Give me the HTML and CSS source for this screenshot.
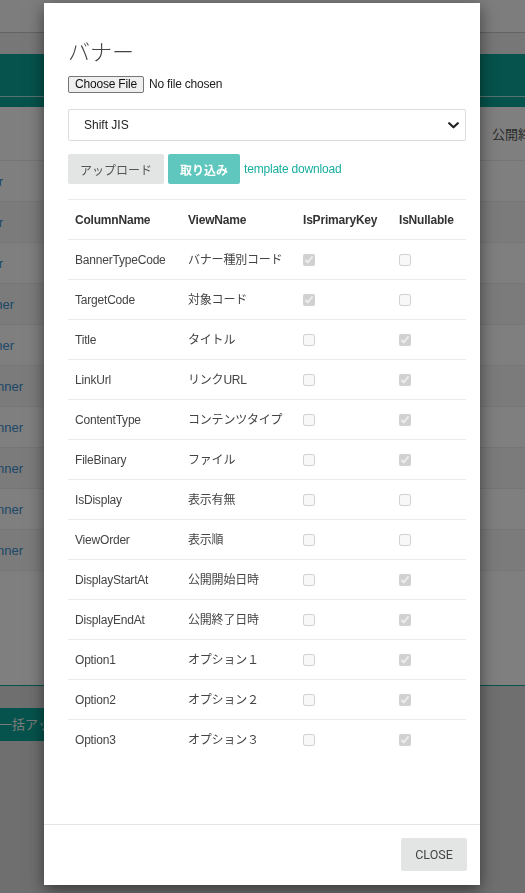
FILE: index.html
```html
<!DOCTYPE html>
<html lang="ja">
<head>
<meta charset="utf-8">
<title>バナー</title>
<link rel="stylesheet" href="styles.css">
</head>
<body>
<div class="page">
  <div class="topbar"></div>
  <div class="subbar"></div>
  <div class="hero"><div class="hero-main"></div><div class="hero-foot"></div></div>
  <div class="list">
    <div class="list-head"><span class="list-head-text">公開終了日時</span></div>
    <div class="list-row"><span class="cut cut-1">TopBanner</span></div>
    <div class="list-row stripe"><span class="cut cut-1">SubBanner</span></div>
    <div class="list-row"><span class="cut cut-1">MainBanner</span></div>
    <div class="list-row stripe"><span class="cut cut-3">SideBanner</span></div>
    <div class="list-row"><span class="cut cut-3">FootBanner</span></div>
    <div class="list-row stripe"><span class="cut cut-4">TopBanner</span></div>
    <div class="list-row"><span class="cut cut-4">SubBanner</span></div>
    <div class="list-row stripe"><span class="cut cut-4">MainBanner</span></div>
    <div class="list-row"><span class="cut cut-4">SideBanner</span></div>
    <div class="list-row stripe"><span class="cut cut-4">FootBanner</span></div>
    <div class="list-end"></div>
  </div>
  <div class="page-bottom">
    <span class="bulk">一括アップロード</span>
  </div>
</div>

<div class="backdrop"></div>

<div class="modal">
  <div class="modal-body">
    <h2 class="modal-title">バナー</h2>
    <div class="file-row">
      <span class="file-btn">Choose File</span>
      <span class="file-name">No file chosen</span>
    </div>
    <div class="select">
      <span>Shift JIS</span>
      <svg class="chev" width="11" height="7" viewBox="0 0 11 7"><path d="M1.2 1.2 L5.5 5.3 L9.8 1.2" fill="none" stroke="#222" stroke-width="2.2" stroke-linecap="round" stroke-linejoin="round"/></svg>
    </div>
    <div class="actions">
      <button class="btn btn-gray">アップロード</button>
      <button class="btn btn-teal">取り込み</button>
      <a class="link">template download</a>
    </div>
    <table class="cols">
      <colgroup><col class="c1"><col class="c2"><col class="c3"><col class="c4"></colgroup>
      <thead>
        <tr><th>ColumnName</th><th>ViewName</th><th>IsPrimaryKey</th><th>IsNullable</th></tr>
      </thead>
      <tbody>
        <tr><td>BannerTypeCode</td><td>バナー種別コード</td><td><input type="checkbox" disabled checked></td><td><input type="checkbox" disabled></td></tr>
        <tr><td>TargetCode</td><td>対象コード</td><td><input type="checkbox" disabled checked></td><td><input type="checkbox" disabled></td></tr>
        <tr><td>Title</td><td>タイトル</td><td><input type="checkbox" disabled></td><td><input type="checkbox" disabled checked></td></tr>
        <tr><td>LinkUrl</td><td>リンクURL</td><td><input type="checkbox" disabled></td><td><input type="checkbox" disabled checked></td></tr>
        <tr><td>ContentType</td><td>コンテンツタイプ</td><td><input type="checkbox" disabled></td><td><input type="checkbox" disabled checked></td></tr>
        <tr><td>FileBinary</td><td>ファイル</td><td><input type="checkbox" disabled></td><td><input type="checkbox" disabled checked></td></tr>
        <tr><td>IsDisplay</td><td>表示有無</td><td><input type="checkbox" disabled></td><td><input type="checkbox" disabled></td></tr>
        <tr><td>ViewOrder</td><td>表示順</td><td><input type="checkbox" disabled></td><td><input type="checkbox" disabled></td></tr>
        <tr><td>DisplayStartAt</td><td>公開開始日時</td><td><input type="checkbox" disabled></td><td><input type="checkbox" disabled checked></td></tr>
        <tr><td>DisplayEndAt</td><td>公開終了日時</td><td><input type="checkbox" disabled></td><td><input type="checkbox" disabled checked></td></tr>
        <tr><td>Option1</td><td>オプション１</td><td><input type="checkbox" disabled></td><td><input type="checkbox" disabled checked></td></tr>
        <tr><td>Option2</td><td>オプション２</td><td><input type="checkbox" disabled></td><td><input type="checkbox" disabled checked></td></tr>
        <tr><td>Option3</td><td>オプション３</td><td><input type="checkbox" disabled></td><td><input type="checkbox" disabled checked></td></tr>
      </tbody>
    </table>
  </div>
  <div class="modal-footer">
    <button class="btn btn-close">CLOSE</button>
  </div>
</div>
</body>
</html>
```

FILE: styles.css
```css
html, body {
  margin: 0;
  padding: 0;
}
body {
  width: 525px;
  height: 893px;
  overflow: hidden;
  background: #dedede;
  font-family: "Liberation Sans", "Noto Sans CJK JP", sans-serif;
  font-size: 12px;
  color: #333;
  position: relative;
}

/* ---------- background page ---------- */
.page {
  width: 525px;
}
.topbar {
  height: 32px;
  background: #fbfbfb;
  border-bottom: 1px solid #c6c6c6;
}
.subbar {
  height: 21px;
  background: #eeeeee;
}
.hero {
  background: #0aa698;
}
.hero-main {
  height: 42px;
}
.hero-foot {
  height: 10px;
  border-top: 1px solid #b3e6e1;
}
.list {
  background: #fff;
}
.list-head {
  height: 53px;
  display: flex;
  align-items: center;
  padding-left: 492px;
  font-size: 13px;
  color: #555;
  white-space: nowrap;
}
.list-row {
  height: 40px;
  border-top: 1px solid #ececec;
  display: flex;
  align-items: center;
}
.list-row.stripe {
  background: #f7f7f7;
}
.cut {
  display: flex;
  justify-content: flex-end;
  white-space: nowrap;
  color: #3a8ed0;
  font-size: 13px;
}
.cut-1 { width: 3px; }
.cut-3 { width: 14px; }
.cut-4 { width: 23px; }
.list-end {
  height: 114px;
  border-top: 1px solid #ececec;
  border-bottom: 1px solid #0aa698;
  background: #fff;
}
.page-bottom {
  padding-top: 22px;
}
.bulk {
  display: inline-block;
  height: 33px;
  line-height: 33px;
  margin-left: -1px;
  padding-right: 14px;
  background: #0aa698;
  color: #f4f4f4;
  font-size: 13px;
}

/* ---------- backdrop ---------- */
.backdrop {
  position: fixed;
  inset: 0;
  background: rgba(0, 0, 0, 0.5);
}

/* ---------- modal ---------- */
.modal {
  position: absolute;
  top: 3px;
  left: 44px;
  width: 436px;
  height: 882px;
  background: #fff;
  box-shadow: 0 5px 15px rgba(0, 0, 0, 0.5);
  display: flex;
  flex-direction: column;
}
.modal-body {
  flex: 1;
  padding: 37px 14px 0 24px;
}
.modal-title {
  margin: 0;
  font-size: 22px;
  line-height: 26px;
  font-weight: 300;
  color: #444;
}
.file-row {
  margin-top: 10px;
  height: 17px;
  display: flex;
  align-items: center;
}
.file-btn {
  box-sizing: border-box;
  height: 17px;
  width: 76px;
  border: 1px solid #767676;
  border-radius: 2px;
  background: #efefef;
  color: #111;
  font-size: 12px;
  letter-spacing: -0.2px;
  line-height: 15px;
  text-align: center;
}
.file-name {
  margin-left: 5px;
  color: #222;
  letter-spacing: -0.2px;
  position: relative;
  top: -1px;
}
.select {
  margin-top: 16px;
  box-sizing: border-box;
  height: 32px;
  border: 1px solid #dcdcdc;
  border-radius: 2px;
  display: flex;
  align-items: center;
  justify-content: space-between;
  padding: 0 6px 0 15px;
  color: #222;
  font-size: 12px;
}
.chev {
  display: block;
}
.actions {
  margin-top: 13px;
  display: flex;
  align-items: center;
  gap: 4px;
}
.btn {
  border: none;
  border-radius: 2px;
  font-family: "Liberation Sans", "Noto Sans CJK JP", sans-serif;
  font-size: 12px;
  height: 30px;
  padding: 0 12px;
  cursor: pointer;
}
.btn-gray {
  background: #e3e5e4;
  color: #555;
}
.btn-teal {
  background: #5fc7bd;
  color: #fff;
  font-weight: 700;
}
.link {
  color: #17ae9e;
  letter-spacing: -0.2px;
  cursor: pointer;
}

.cols {
  margin-top: 15px;
  width: 398px;
  table-layout: fixed;
  border-collapse: separate;
  border-spacing: 0;
}
.c1 { width: 113px; }
.c2 { width: 115px; }
.c3 { width: 96px; }
.c4 { width: 74px; }
.cols th,
.cols td {
  padding: 11px 7px 9px;
  line-height: 19px;
  border-top: 1px solid #ebebeb;
  text-align: left;
  white-space: nowrap;
  vertical-align: middle;
}
.cols th {
  font-weight: 700;
  color: #333;
  letter-spacing: -0.2px;
}
.cols td {
  color: #444;
  letter-spacing: -0.2px;
}
.cols input[type="checkbox"] {
  width: 12px;
  height: 12px;
  margin: -2px 0 0;
  vertical-align: middle;
}

.modal-footer {
  border-top: 1px solid #e5e5e5;
  padding: 13px 13px 14px;
  display: flex;
  justify-content: flex-end;
}
.btn-close {
  width: 66px;
  height: 33px;
  padding: 0;
  background: #e3e5e4;
  color: #444;
  font-family: Roboto, "Liberation Sans", sans-serif;
  font-size: 12.5px;
}
```
